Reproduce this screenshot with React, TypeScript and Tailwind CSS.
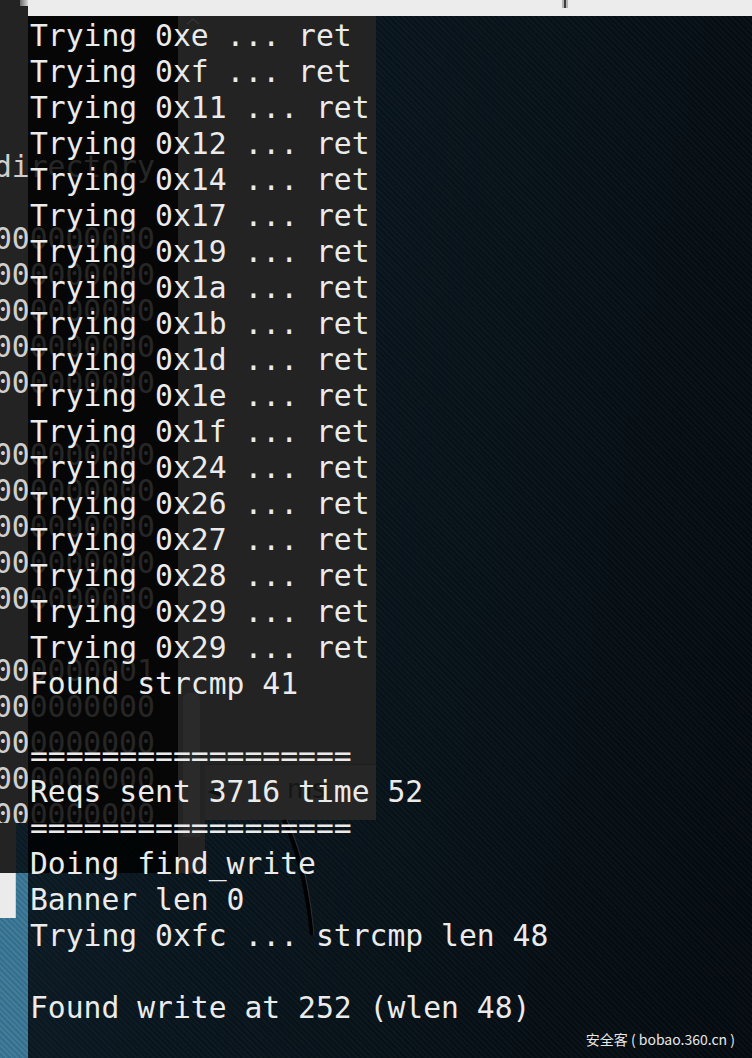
const mainLines = [
  "Trying 0xe ... ret",
  "Trying 0xf ... ret",
  "Trying 0x11 ... ret",
  "Trying 0x12 ... ret",
  "Trying 0x14 ... ret",
  "Trying 0x17 ... ret",
  "Trying 0x19 ... ret",
  "Trying 0x1a ... ret",
  "Trying 0x1b ... ret",
  "Trying 0x1d ... ret",
  "Trying 0x1e ... ret",
  "Trying 0x1f ... ret",
  "Trying 0x24 ... ret",
  "Trying 0x26 ... ret",
  "Trying 0x27 ... ret",
  "Trying 0x28 ... ret",
  "Trying 0x29 ... ret",
  "Trying 0x29 ... ret",
  "Found strcmp 41",
  "",
  "==================",
  "Reqs sent 3716 time 52",
  "==================",
  "Doing find_write",
  "Banner len 0",
  "Trying 0xfc ... strcmp len 48",
  "",
  "Found write at 252 (wlen 48)",
];

const zeros = "000000000";
const backLines = [
  "directory",
  "",
  zeros, zeros, zeros, zeros, zeros,
  "",
  zeros, zeros, zeros, zeros, zeros,
  "",
  "000000001",
  zeros, zeros, zeros, zeros,
];

const mono = "font-['DejaVu_Sans_Mono',monospace] text-[29.7px] leading-[36px] whitespace-pre";

export default function App() {
  return (
    <div className="relative w-[752px] h-[1058px] overflow-hidden bg-[linear-gradient(100deg,#0d1e29_0%,#08141c_40%,#040a0f_100%)]">
      {/* wallpaper hatch */}
      <div className="absolute inset-0 bg-[image:repeating-linear-gradient(45deg,rgba(255,255,255,0.025)_0px,rgba(255,255,255,0.025)_2px,transparent_2px,transparent_4px)]" />

      {/* blue panel bottom left */}
      <div className="absolute left-0 top-[873px] w-[28px] h-[185px] bg-[#33708f] bg-[image:repeating-linear-gradient(45deg,rgba(255,255,255,0.08)_0px,rgba(255,255,255,0.08)_2px,transparent_2px,transparent_4px)]" />
      <div className="absolute left-0 top-[873px] w-[16px] h-[45px] bg-[#ebebeb] border-r border-[#cfcfcf]" />

      {/* back terminal on the left */}
      <div className="absolute left-0 top-0 w-[178px] h-[823px] bg-[#232323] overflow-hidden">
        <div className="absolute left-[20px] top-0 w-[8px] h-[6px] bg-[linear-gradient(90deg,#6a6a6a,#d8d8d8)]" />
        <div className={`ml-[-6px] pt-[149px] text-[#cfcfcf] ${mono}`}>
          {backLines.map((l, i) => (
            <div key={i} className="h-[36px]">{l}</div>
          ))}
        </div>
      </div>
      <div className="absolute left-0 top-[823px] w-[16px] h-[50px] bg-[#232323]" />

      {/* gray window behind */}
      <div className="absolute left-[178px] top-[16px] w-[198px] h-[748px] bg-[#232323]">
        <svg className="absolute left-[7px] top-[1px]" width="16" height="8" viewBox="0 0 16 8">
          <path d="M2 7 L8 2 L14 7" stroke="#333" strokeWidth="1.5" fill="none" />
        </svg>
      </div>
      <div className="absolute left-[178px] top-[764px] w-[27px] h-[109px] bg-[#232323]" />
      <div className="absolute left-[183px] top-[693px] w-[17px] h-[144px] rounded-t-[6px] bg-[#2a2a2a]" />
      <div className="absolute left-[205px] top-[764px] w-[171px] h-[56px] bg-[#262626] border-t border-[#1d1d1d]">
        <svg className="absolute left-[2px] top-[22px]" width="16" height="10" viewBox="0 0 16 10">
          <path d="M1 5 L14 0 L14 10 Z" fill="#111" />
        </svg>
        <div className="absolute left-[82px] top-[6px] text-[#151515] font-['DejaVu_Sans',sans-serif] text-[26px] leading-[36px]">ms</div>
      </div>

      {/* wallpaper cable */}
      <svg className="absolute left-0 top-0" width="752" height="1058" viewBox="0 0 752 1058">
        <path d="M284 820 C 296 845, 306 880, 312 935" stroke="#000" strokeWidth="4" fill="none" />
        <path d="M287 820 C 299 845, 309 880, 314 935" stroke="#3c4349" strokeWidth="1" fill="none" opacity="0.6" />
      </svg>

      {/* dim layer of front terminal */}
      <div className="absolute left-[28px] top-[16px] w-[150px] h-[857px] bg-[rgba(0,0,0,0.82)]" />

      {/* front terminal */}
      <div className="absolute left-[28px] top-0 right-0 bottom-0 flex flex-col">
        <div className="relative h-[16px] shrink-0 bg-[#ececec]">
          <div className="absolute left-[534px] top-0 w-[6px] h-[8px] bg-[#b5b5b5] flex justify-center">
            <div className="w-[2px] h-full bg-[#3d3d3d]" />
          </div>
        </div>
        <div className={`pl-[2px] pt-[2px] text-[#ebebeb] ${mono}`}>
          {mainLines.map((l, i) => (
            <div key={i} className="h-[36px]">{l}</div>
          ))}
        </div>
      </div>

      {/* watermark */}
      <div className="absolute right-[17px] bottom-[9px] text-[14px] leading-[20px] text-[#e8e8e8] whitespace-pre font-['Noto_Sans_CJK_SC','Noto_Sans',sans-serif]">
        安全客 ( bobao.360.cn )
      </div>
    </div>
  );
}
